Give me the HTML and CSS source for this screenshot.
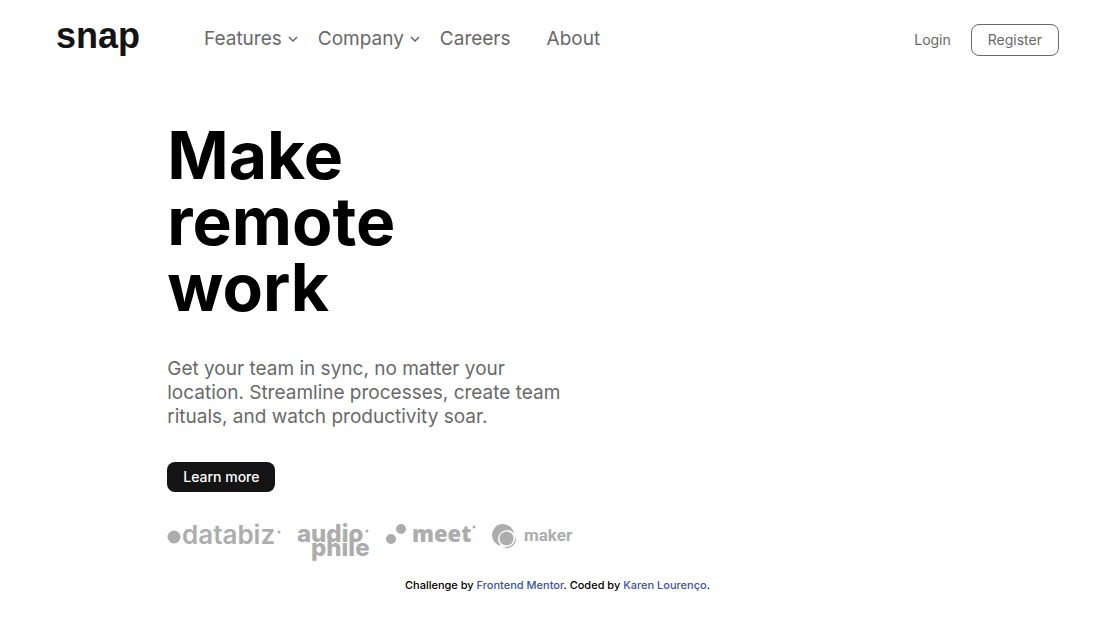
FILE: index.html
```html
<!DOCTYPE html>
<html lang="en">
<head>
<meta charset="utf-8">
<meta name="viewport" content="width=device-width, initial-scale=1">
<title>Snap</title>
<link rel="stylesheet" href="styles.css">
</head>
<body>
<header class="header">
  <a class="brand" href="#">snap</a>
  <nav class="nav">
    <div class="nav-item">
      <a href="#">Features</a>
      <svg class="chevron" viewBox="0 0 10 6" aria-hidden="true"><path d="m1 1 4 4 4-4"/></svg>
    </div>
    <div class="nav-item">
      <a href="#">Company</a>
      <svg class="chevron" viewBox="0 0 10 6" aria-hidden="true"><path d="m1 1 4 4 4-4"/></svg>
    </div>
    <div class="nav-item"><a href="#">Careers</a></div>
    <div class="nav-item"><a href="#">About</a></div>
  </nav>
  <div class="account">
    <a class="login" href="#">Login</a>
    <button class="register" type="button">Register</button>
  </div>
</header>
<main class="hero">
  <h1 class="title">Make remote work</h1>
  <p class="lead">Get your team in sync, no matter your location. Streamline processes, create team rituals, and watch productivity soar.</p>
  <button class="learn" type="button">Learn more</button>
  <div class="clients">
    <svg class="client" width="114" height="36" viewBox="0 0 114 36" role="img" aria-label="databiz">
      <circle cx="7" cy="13" r="6.5"/>
      <text class="databiz" x="15" y="20">databiz</text>
      <circle cx="112" cy="8" r="1.5"/>
    </svg>
    <svg class="client" width="73" height="36" viewBox="0 0 73 36" role="img" aria-label="audiophile">
      <text class="audiophile" x="0" y="18">audio</text>
      <text class="audiophile" x="14" y="32">phile</text>
      <circle cx="70" cy="7" r="1.5"/>
    </svg>
    <svg class="client" width="90" height="36" viewBox="0 0 90 36" role="img" aria-label="meet">
      <circle cx="5" cy="15" r="5"/>
      <circle cx="15" cy="5" r="5"/>
      <text class="meet" x="26" y="18">meet</text>
      <circle cx="88" cy="3" r="1.5"/>
    </svg>
    <svg class="client" width="82" height="36" viewBox="0 0 82 36" role="img" aria-label="maker">
      <circle cx="11" cy="11" r="11"/>
      <circle class="ring-gap" cx="15" cy="15" r="9"/>
      <path d="M23 11A9 9 0 0 1 10 22.500A9.800 9.800 0 0 0 23 11Z"/>
      <circle cx="14.500" cy="14.500" r="7"/>
      <text class="maker" x="32" y="17">maker</text>
    </svg>
  </div>
</main>
<footer class="footer">Challenge by <a href="#">Frontend Mentor</a>. Coded by <a href="#">Karen Lourenço</a>.</footer>
</body>
</html>
```
FILE: styles.css
```css
* { box-sizing: border-box; }

body {
  margin: 0;
  background: #fff;
  color: #000;
  font-family: Inter, "Liberation Sans", sans-serif;
  font-weight: 500;
}

a { color: inherit; text-decoration: none; }

button { font: inherit; cursor: pointer; }

.header {
  display: flex;
  align-items: center;
  padding: 16px 56px 0;
  color: #696969;
}

.brand {
  width: 148px;
  color: #141414;
  font-family: "Liberation Sans", sans-serif;
  font-size: 36px;
  font-weight: 700;
  line-height: 36px;
}

.nav {
  display: flex;
  flex: 1;
  padding-top: 6px;
  font-size: 19px;
  font-weight: 400;
  line-height: 24px;
}

.nav-item {
  display: flex;
  align-items: center;
  gap: 6px;
  margin-right: 20px;
}

.nav-item + .nav-item:nth-child(3) { margin-right: 36px; }

.chevron {
  width: 10px;
  height: 6px;
  fill: none;
  stroke: #686868;
  stroke-width: 1.5;
}

.account {
  display: flex;
  align-items: center;
  gap: 20px;
  padding-top: 8px;
  font-size: 14px;
  font-weight: 400;
}

.register {
  height: 32px;
  padding: 0 16px 2px;
  border: 1px solid #696969;
  border-radius: 8px;
  background: #fff;
  color: #696969;
}

.login { padding-bottom: 2px; }

.hero {
  max-width: 1200px;
  padding: 66px 15% 0;
}

.title {
  max-width: 300px;
  margin: 0;
  font-size: 66px;
  font-weight: 700;
  line-height: 66px;
}

.lead {
  max-width: 412px;
  margin: 37px 0 33px;
  color: #696969;
  font-size: 19px;
  font-weight: 400;
  line-height: 24px;
}

.learn {
  display: block;
  height: 30px;
  padding: 0 16px 2px;
  border: 0;
  border-radius: 8px;
  background: #141414;
  color: #fff;
  font-size: 14px;
}

.clients {
  display: flex;
  gap: 16px;
  margin-top: 32px;
}

.client {
  flex: none;
  overflow: visible;
  fill: #adadad;
}

.databiz { font: 600 26px Inter, sans-serif; }
.audiophile { font: 800 24px Inter, sans-serif; }
.meet { font: 800 22px "Open Sans", sans-serif; }
.maker { font: 700 17px Roboto, sans-serif; }

.ring-gap { fill: #fff; }

.footer {
  padding: 18px 0 0;
  font-size: 11px;
  line-height: 14px;
  text-align: center;
}

.footer a { color: #3e52a3; }
```
